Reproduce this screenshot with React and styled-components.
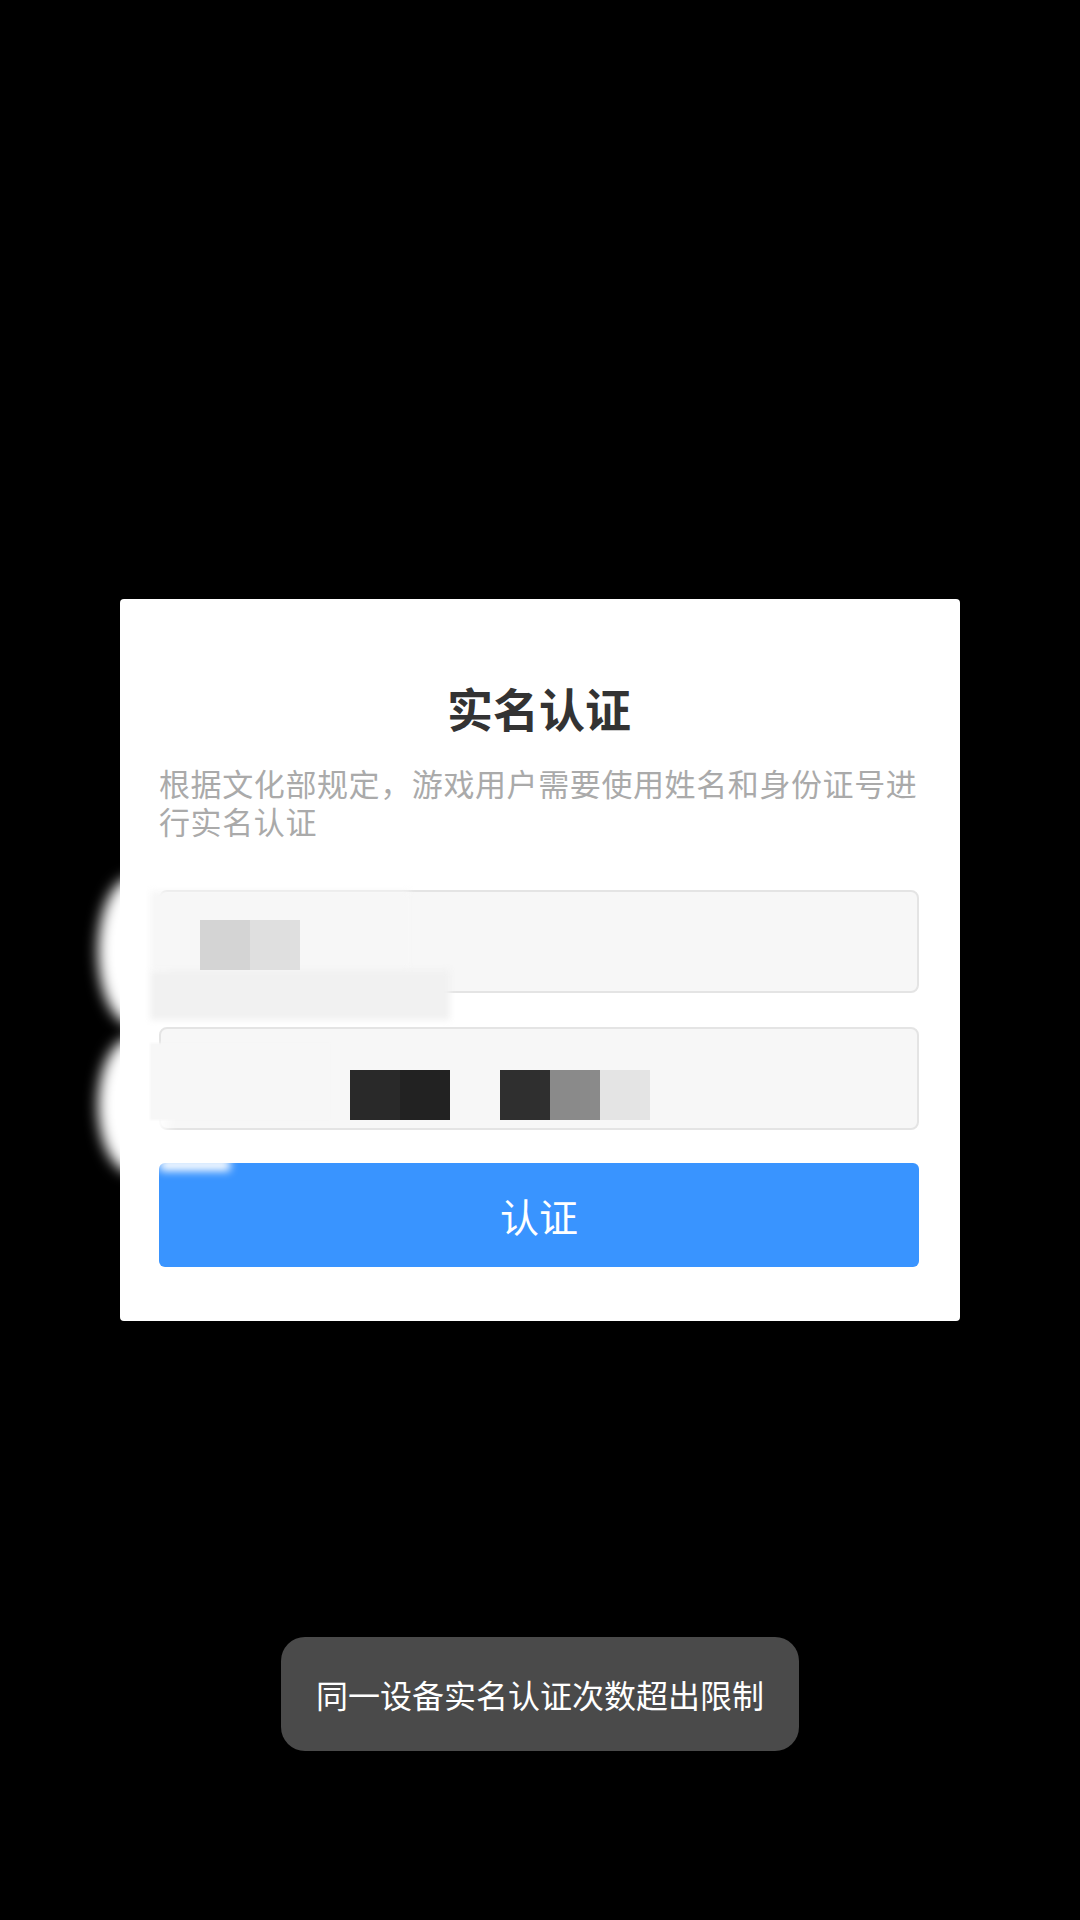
import React from "react";
import styled, { createGlobalStyle } from "styled-components";

const GlobalStyle = createGlobalStyle`
  html, body {
    margin: 0;
    padding: 0;
    background: #000;
  }
  body {
    font-family: "Noto Sans CJK SC", "Noto Sans", sans-serif;
  }
  * { box-sizing: border-box; }
`;

const Page = styled.div`
  min-height: 1920px;
  background: #000;
  display: flex;
  flex-direction: column;
  align-items: center;
  padding-top: 599px;
`;

const Card = styled.div`
  position: relative;
  width: 840px;
  background: #fff;
  border-radius: 4px;
  padding: 83px 41px 54px 39px;
  display: flex;
  flex-direction: column;
`;

const Title = styled.h1`
  margin: 0;
  font-size: 46px;
  line-height: 50px;
  font-weight: 700;
  color: #333;
  text-align: center;
`;

const Desc = styled.p`
  margin: 32px 0 0;
  font-size: 31px;
  line-height: 38px;
  letter-spacing: 0.6px;
  color: #aaaaaa;
`;

const Field = styled.div`
  position: relative;
  margin-top: ${(p) => p.$gap}px;
  height: 103px;
  border: 2px solid #e4e4e4;
  border-radius: 8px;
  background: #f7f7f7;
  display: flex;
  align-items: center;
  padding-left: ${(p) => p.$indent}px;
`;

const PixelRow = styled.div`
  position: relative;
  z-index: 2;
  display: flex;
  gap: 50px;
  margin-top: ${(p) => p.$shift}px;
`;

const PixelGroup = styled.div`
  display: flex;
`;

const Pixel = styled.span`
  display: block;
  width: 50px;
  height: 50px;
  background: ${(p) => p.$c};
`;

const Button = styled.button`
  margin-top: 33px;
  height: 104px;
  width: 100%;
  border: none;
  border-radius: 6px;
  background: #3994ff;
  color: #fff;
  font-family: "Noto Sans CJK SC", "Noto Sans", sans-serif;
  font-size: 39px;
  padding: 0;
`;

const Smudge = styled.div`
  position: absolute;
  z-index: 1;
  left: ${(p) => p.$x}px;
  top: ${(p) => p.$y}px;
  width: ${(p) => p.$w}px;
  height: ${(p) => p.$h}px;
  background: ${(p) => p.$bg};
  border-radius: ${(p) => p.$r || 0};
  filter: blur(${(p) => p.$blur}px);
  pointer-events: none;
`;

const Toast = styled.div`
  margin-top: 316px;
  height: 114px;
  padding: 0 35px;
  background: #4a4a4a;
  border-radius: 24px;
  color: #fff;
  font-size: 32px;
  display: flex;
  align-items: center;
  justify-content: center;
`;

const smudges = [
  { x: -22, y: 278, w: 70, h: 148, bg: "#fff", r: "50%", blur: 7 },
  { x: -22, y: 438, w: 70, h: 136, bg: "#fff", r: "50%", blur: 7 },
  { x: 30, y: 292, w: 260, h: 79, bg: "#f7f7f7", blur: 3 },
  { x: 30, y: 371, w: 300, h: 50, bg: "#f1f1f1", blur: 3 },
  { x: 30, y: 444, w: 180, h: 77, bg: "#f7f7f7", blur: 1 },
  { x: 40, y: 560, w: 70, h: 12, bg: "#fff", blur: 4 },
];

export default function App() {
  return (
    <>
      <GlobalStyle />
      <Page>
        <Card>
          {smudges.map((s, i) => (
            <Smudge
              key={i}
              $x={s.x}
              $y={s.y}
              $w={s.w}
              $h={s.h}
              $bg={s.bg}
              $r={s.r}
              $blur={s.blur}
            />
          ))}
          <Title>实名认证</Title>
          <Desc>根据文化部规定，游戏用户需要使用姓名和身份证号进行实名认证</Desc>
          <Field $gap={50} $indent={39}>
            <PixelRow $shift={6}>
              <PixelGroup>
                <Pixel $c="#d4d4d4" />
                <Pixel $c="#dfdfdf" />
              </PixelGroup>
            </PixelRow>
          </Field>
          <Field $gap={34} $indent={189}>
            <PixelRow $shift={32}>
              <PixelGroup>
                <Pixel $c="#292929" />
                <Pixel $c="#222222" />
              </PixelGroup>
              <PixelGroup>
                <Pixel $c="#2f2f2f" />
                <Pixel $c="#8a8a8a" />
                <Pixel $c="#e4e4e4" />
              </PixelGroup>
            </PixelRow>
          </Field>
          <Button>认证</Button>
        </Card>
        <Toast>同一设备实名认证次数超出限制</Toast>
      </Page>
    </>
  );
}
